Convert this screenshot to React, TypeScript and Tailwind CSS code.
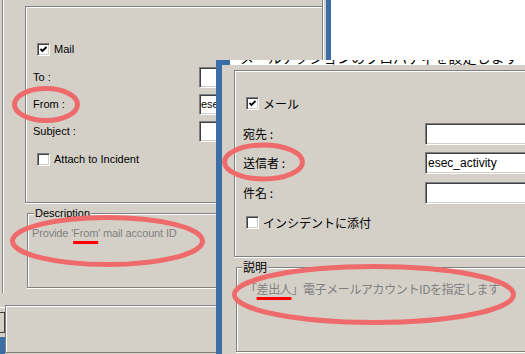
import React from "react";

const sunken =
  "bg-white border border-t-[#808080] border-l-[#808080] border-r-white border-b-white shadow-[inset_1px_1px_0_#404040,inset_-1px_-1px_0_#d4d0c8]";

function CheckBox({ checked }: { checked?: boolean }) {
  return (
    <div className={`w-[13px] h-[13px] shrink-0 flex items-center justify-center ${sunken}`}>
      {checked && (
        <svg width="9" height="9" viewBox="0 0 9 9">
          <path d="M1.5 4l2 2 4-4" fill="none" stroke="#000" strokeWidth="1.8" />
        </svg>
      )}
    </div>
  );
}

function TextBox({ value, className }: { value?: string; className: string }) {
  return (
    <div className={`${sunken} ${className} shrink-0 flex items-center overflow-hidden whitespace-nowrap`}>
      {value}
    </div>
  );
}

function EnRow({ label, value, className }: { label: string; value?: string; className: string }) {
  return (
    <div className={`flex items-center h-[21px] ${className}`}>
      <div className="w-[173px] shrink-0 pl-[7px]">{label}</div>
      <TextBox value={value} className="w-[140px] h-[21px] pl-px" />
    </div>
  );
}

function JpRow({ label, value, className }: { label: string; value?: string; className: string }) {
  return (
    <div className={`flex items-center h-[22px] ${className}`}>
      <div className="w-[190px] shrink-0 pl-[8px]">{label}</div>
      <TextBox
        value={value}
        className="w-[140px] h-[22px] pl-[2px] font-['Liberation_Sans',Arial,sans-serif]"
      />
    </div>
  );
}

export default function App() {
  return (
    <div className="relative w-[525px] h-[354px] overflow-hidden bg-[#d4d0c8] text-black font-['Liberation_Sans',Arial,sans-serif] text-[11px] leading-[13px] flex items-start">
      {/* english dialog */}
      <div className="w-[323px] shrink-0 h-full flex border-r border-[#808080] shadow-[1px_0_0_#fff]">
        <div className="w-[5px] shrink-0 h-full flex flex-col">
          <div className="ml-[2px] w-[2px] h-[293px] shrink-0 border-l border-[#808080] bg-white" />
          <div className="mt-[14px] h-px shrink-0 bg-white" />
          <div className="mt-[4px] h-[21px] shrink-0 border border-l-0 border-[#404040]" />
          <div className="mt-[4px] flex-1 bg-[#3a6ea5]" />
        </div>
        <div className="flex-1 min-w-0 overflow-hidden flex flex-col pt-[6px]">
          <div className="ml-[20px] h-[197px] shrink-0 border-t border-l border-b border-[#808080] shadow-[inset_1px_1px_0_#fff,0_1px_0_#fff] flex flex-col">
            <div className="mt-[36px] ml-[11px] h-[13px] flex items-center gap-[4px]">
              <CheckBox checked />
              Mail
            </div>
            <EnRow label="To :" className="mt-[11px]" />
            <EnRow label="From :" value="esec_activity" className="mt-[6px]" />
            <EnRow label="Subject :" className="mt-[6px]" />
            <div className="mt-[11px] ml-[11px] h-[13px] flex items-center gap-[4px]">
              <CheckBox />
              Attach to Incident
            </div>
          </div>

          <fieldset className="ml-[22px] mt-[4px] h-[81px] shrink-0 border border-r-0 border-[#808080] shadow-[inset_1px_1px_0_#fff,0_1px_0_#fff]">
            <legend className="ml-[6px] px-px bg-[#d4d0c8] leading-[13px]">Description</legend>
            <div className="mt-[7px] pl-[4px] text-[#808080] tracking-[-0.15px] whitespace-nowrap">
              Provide '
              <span className="underline decoration-[#ff0000] decoration-[3px] underline-offset-[4px]">From</span>
              ' mail account ID
            </div>
          </fieldset>

          <div className="mt-[17px] h-[48px] shrink-0 border-t border-l border-b border-[#808080] shadow-[inset_1px_1px_0_#fff]" />
        </div>
      </div>

      {/* window behind, top right */}
      <div className="ml-[3px] w-[199px] shrink-0 h-[60px] flex">
        <div className="w-[5px] shrink-0 bg-[#3a6ea5]" />
        <div className="flex-1 bg-white" />
      </div>

      {/* japanese dialog */}
      <div className="absolute left-[216px] top-[60px] w-[309px] h-[294px] overflow-hidden flex flex-col font-['Noto_Sans_CJK_JP',sans-serif] text-[12px] leading-[14px]">
        <div className="h-[5px] shrink-0 flex overflow-hidden">
          <div className="w-[14px] shrink-0 bg-[#3a6ea5]" />
          <div className="flex-1 min-w-0 h-[5px] bg-white overflow-hidden">
            <div className="-translate-y-[10px] pl-[10px] text-[14px] leading-[14px] whitespace-nowrap">
              メールアクションのプロパティを設定します
            </div>
          </div>
        </div>
        <div className="flex-1 min-h-0 flex">
          <div className="w-[6px] shrink-0 bg-[#3a6ea5]" />
          <div className="flex-1 min-w-0 overflow-hidden bg-[#d4d0c8] pt-[5px] flex flex-col">
            <div className="ml-[12px] h-[187px] shrink-0 border-t border-l border-b border-[#808080] shadow-[inset_1px_1px_0_#fff,0_1px_0_#fff] flex flex-col">
              <div className="mt-[26px] ml-[11px] h-[13px] flex items-center gap-[4px]">
                <CheckBox checked />
                メール
              </div>
              <JpRow label="宛先 :" className="mt-[13px]" />
              <JpRow label="送信者 :" value="esec_activity" className="mt-[7px]" />
              <JpRow label="件名 :" className="mt-[8px]" />
              <div className="mt-[12px] ml-[11px] h-[13px] flex items-center gap-[4px]">
                <CheckBox />
                インシデントに添付
              </div>
            </div>

            <fieldset className="ml-[14px] mt-[3px] h-[92px] shrink-0 border border-r-0 border-[#808080] shadow-[inset_1px_1px_0_#fff,0_1px_0_#fff]">
              <legend className="ml-[5px] px-px bg-[#d4d0c8] leading-[14px]">説明</legend>
              <div className="mt-[8px] pl-[8px] text-[#808080] tracking-[-0.4px] whitespace-nowrap">
                「
                <span className="underline decoration-[#ff0000] decoration-[3px] underline-offset-[3px]">差出人</span>
                」電子メールアカウントIDを指定します
              </div>
            </fieldset>
          </div>
        </div>
      </div>

      {/* annotations */}
      <svg className="absolute inset-0 pointer-events-none" width="525" height="354" viewBox="0 0 525 354">
        <g fill="none" stroke="#ef6b6b" strokeWidth="5">
          <ellipse cx="46" cy="104.5" rx="31.5" ry="16" />
          <ellipse cx="107.5" cy="241" rx="95" ry="23.5" />
          <ellipse cx="263.5" cy="162" rx="39" ry="17" />
          <ellipse cx="374" cy="294.5" rx="139.5" ry="28" />
        </g>
      </svg>
    </div>
  );
}
